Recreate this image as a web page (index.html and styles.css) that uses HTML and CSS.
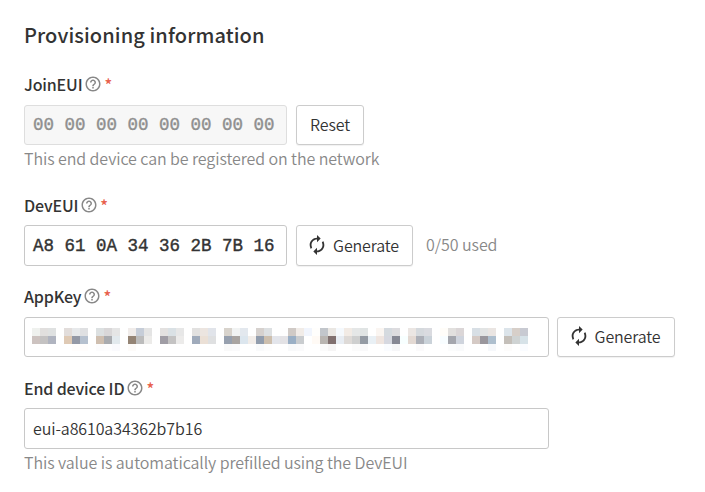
FILE: index.html
```html
<!DOCTYPE html>
<html lang="en">
<head>
<meta charset="utf-8">
<title>Provisioning information</title>
<link rel="stylesheet" href="styles.css">
</head>
<body>
<svg class="defs" aria-hidden="true">
  <symbol id="help" viewBox="0 0 24 24"><path d="M11 18h2v-2h-2v2zm1-16C6.48 2 2 6.48 2 12s4.480 10 10 10 10-4.480 10-10S17.520 2 12 2zm0 18c-4.410 0-8-3.590-8-8s3.590-8 8-8 8 3.590 8 8-3.590 8-8 8zm0-14c-2.210 0-4 1.790-4 4h2c0-1.100.9-2 2-2s2 .9 2 2c0 2-3 1.750-3 5h2c0-2.250 3-2.500 3-5 0-2.210-1.790-4-4-4z"/></symbol>
  <symbol id="renew" viewBox="0 0 24 24"><path d="M12 6v3l4-4-4-4v3c-4.420 0-8 3.580-8 8 0 1.570.46 3.030 1.240 4.260L6.700 14.800c-.45-.83-.7-1.790-.7-2.800 0-3.310 2.690-6 6-6zm6.760 1.740L17.300 9.200c.44.84.7 1.790.7 2.800 0 3.310-2.690 6-6 6v-3l-4 4 4 4v-3c4.420 0 8-3.580 8-8 0-1.570-.46-3.030-1.240-4.260z"/></symbol>
</svg>
<main class="form">
  <h1 class="title">Provisioning information</h1>

  <section class="field join">
    <div class="label"><span>JoinEUI</span><svg class="help"><use href="#help"/></svg><span class="required">*</span></div>
    <div class="row">
      <div class="input short mono disabled">00 00 00 00 00 00 00 00</div>
      <button class="button reset">Reset</button>
    </div>
    <p class="hint">This end device can be registered on the network</p>
  </section>

  <section class="field dev">
    <div class="label"><span>DevEUI</span><svg class="help"><use href="#help"/></svg><span class="required">*</span></div>
    <div class="row tall">
      <div class="input short mono">A8 61 0A 34 36 2B 7B 16</div>
      <button class="button generate"><svg class="renew"><use href="#renew"/></svg><span>Generate</span></button>
      <span class="used">0/50 used</span>
    </div>
  </section>

  <section class="field app">
    <div class="label"><span>AppKey</span><svg class="help"><use href="#help"/></svg><span class="required">*</span></div>
    <div class="row">
      <div class="input long masked"><div class="mosaic" id="mosaic"></div></div>
      <button class="button generate wide"><svg class="renew"><use href="#renew"/></svg><span>Generate</span></button>
    </div>
  </section>

  <section class="field id">
    <div class="label"><span>End device ID</span><svg class="help"><use href="#help"/></svg><span class="required">*</span></div>
    <div class="row tall">
      <div class="input long value">eui-a8610a34362b7b16</div>
    </div>
    <p class="hint">This value is automatically prefilled using the DevEUI</p>
  </section>
</main>
<script src="mosaic.js"></script>
</body>
</html>
```
FILE: styles.css
```css
* { box-sizing: border-box; }

body {
  margin: 0;
  background: #fff;
  color: #333;
  font-family: "Noto Sans CJK SC", "Open Sans", sans-serif;
  font-size: 16px;
  font-weight: 350;
  letter-spacing: -0.15px;
}

.defs { display: none; }

.form { padding: 19px 24px 0; }

.title {
  margin: 0;
  height: 33px;
  line-height: 32px;
  font-size: 20px;
  font-weight: 500;
  letter-spacing: 0.1px;
  white-space: nowrap;
}

.field { white-space: nowrap; }
.join { margin-top: 20px; height: 121px; }
.dev { height: 91px; }
.app { height: 92px; }

.label {
  display: flex;
  align-items: center;
  height: 26px;
  margin-bottom: 7px;
  padding-bottom: 2px;
  font-size: 16px;
  font-weight: 500;
  line-height: 24px;
}

.dev .label,
.id .label { margin-bottom: 6px; }

.help {
  width: 18px;
  height: 18px;
  margin-left: 2px;
  fill: #888;
}

.required {
  margin-left: 2px;
  color: #e8604c;
}

.row {
  display: flex;
  align-items: center;
  height: 40px;
}

.row.tall { height: 41px; }

.input {
  height: 100%;
  border: 1px solid #c8c8c8;
  border-radius: 3px;
  display: flex;
  align-items: center;
  padding-left: 8px;
  overflow: hidden;
}

.short { width: 263px; }
.long { width: 525px; }

.value {
  padding: 0 0 1px 8px;
  letter-spacing: -0.1px;
}

.mono {
  font-family: "Liberation Mono", monospace;
  font-size: 17.5px;
  font-weight: 400;
  letter-spacing: 0;
  -webkit-text-stroke: 0.4px currentColor;
}

.disabled {
  background: #f7f7f7;
  border-color: #dedede;
  color: #8f8f8f;
}

.button {
  height: 100%;
  margin: 0 0 0 9px;
  padding: 0 0 2px;
  border: 1px solid #ccc;
  border-radius: 3px;
  background: #fff;
  box-shadow: 0 1px 1px rgba(0, 0, 0, 0.06);
  color: #333;
  font: inherit;
  letter-spacing: inherit;
  display: flex;
  align-items: center;
  justify-content: center;
}

.reset { width: 68px; }

.generate {
  width: 117px;
  padding-right: 4px;
  gap: 5px;
}

.generate.wide {
  width: 118px;
  margin-left: 8px;
}

.renew {
  width: 22px;
  height: 22px;
  fill: #333;
}

.used {
  margin-left: 13px;
  padding-bottom: 3px;
  color: #888;
  letter-spacing: -0.05px;
}

.hint {
  margin: 0;
  height: 28px;
  line-height: 26px;
  color: #888;
  letter-spacing: -0.08px;
}

.masked {
  padding: 6px 0 0 7px;
  align-items: flex-start;
}

.mosaic {
  margin-top: 4px;
  display: grid;
  grid-auto-flow: column;
  grid-template-rows: 8px 8px 7px;
  grid-auto-columns: 8px;
}
```
FILE: mosaic.js
```js
// Each entry is one column: top, middle and bottom cell colours.
const columns = `
eff1ee cdc3c0 ffffff|e1dfde c4c2c2 ffffff|dfe1e1 b0b4c0 ffffff|ffffff ffffff ffffff
e2dddb dfcab5 ffffff|e7e9eb 9499a6 fffdfc|dfe0e2 b6c1cf fffdfc|ffffff ffffff ffffff
dce0e1 cfbfb0 fcfcfd|d9d7d8 a9abaf fdfdfe|e5e5e5 e2e9ed fafafd|ffffff ffffff ffffff
f0ecea 948475 fdfbf9|c6cdd8 bcbcbc ffffff|e4e4e4 ecebe9 ffffff|ffffff ffffff ffffff
e3e1e0 a09da5 ffffff|dae1e5 c4c3c3 ffffff|e7e7e7 ecebea ffffff|ffffff ffffff ffffff
e2e1e0 a0abbb ffffff|ece5e0 ebe0d6 ffffff|e1e4ea dfe0e1 ffffff|ffffff ffffff ffffff
d8d3cc 97a0ae f9f9f9|f1f3f3 a9a4a1 fafafb|e3e8ee dce6ee ffffff|ffffff f2ede9 ffffff
d6d1ce 929dad f9fafb|dde0e2 cdbfae fdfdfd|ffffff e3e5eb ffffff|fefefe e3e2e5 ffffff
d0cac6 9aafc5 f8f9fa|f1ece8 c9cccf fafafb|f1f5fd ffffff ffffff|fffefc fffaf5 ffffff
c2c6cb b9b5b1 fbfbfb|eae7e3 80706f f6f5f5|f5f9fd e8edf3 ffffff|f2ebe5 dedad7 ffffff
e5e7e7 cecfcf fbfbfb|e0e4e4 949ba4 f9f9fa|ffffff e9f0f5 ffffff|faf5f1 efe5e0 ffffff
d5dadf d6d8e0 fafcff|dddcdf 868894 f6f6f8|ffffff f8ffff ffffff|ebe6e3 e3d9d3 ffffff
d5d9dd acafb7 fbfafb|dadbe0 cad2d9 ffffff|ffffff ffffff ffffff|fffdf9 f8fdff ffffff
e2e0de a4a6ad fbfcfc|dbd6d7 cfd4dd f9fafb|ffffff ffffff ffffff|d8dfe5 d5cac5 ffffff
e2e4e4 9a979d ffffff|eae5e2 aebfce f6f8fb|ffffff ffffff ffffff|dce4ea c4bfb9 fdfcfb
d7cfc9 cfd3d3 ffffff|c8cad2 d6e2e8 fafcff`;

const mosaic = document.getElementById("mosaic");
for (const colour of columns.match(/[0-9a-f]{6}/g)) {
  const cell = document.createElement("i");
  cell.style.background = "#" + colour;
  mosaic.append(cell);
}
```
